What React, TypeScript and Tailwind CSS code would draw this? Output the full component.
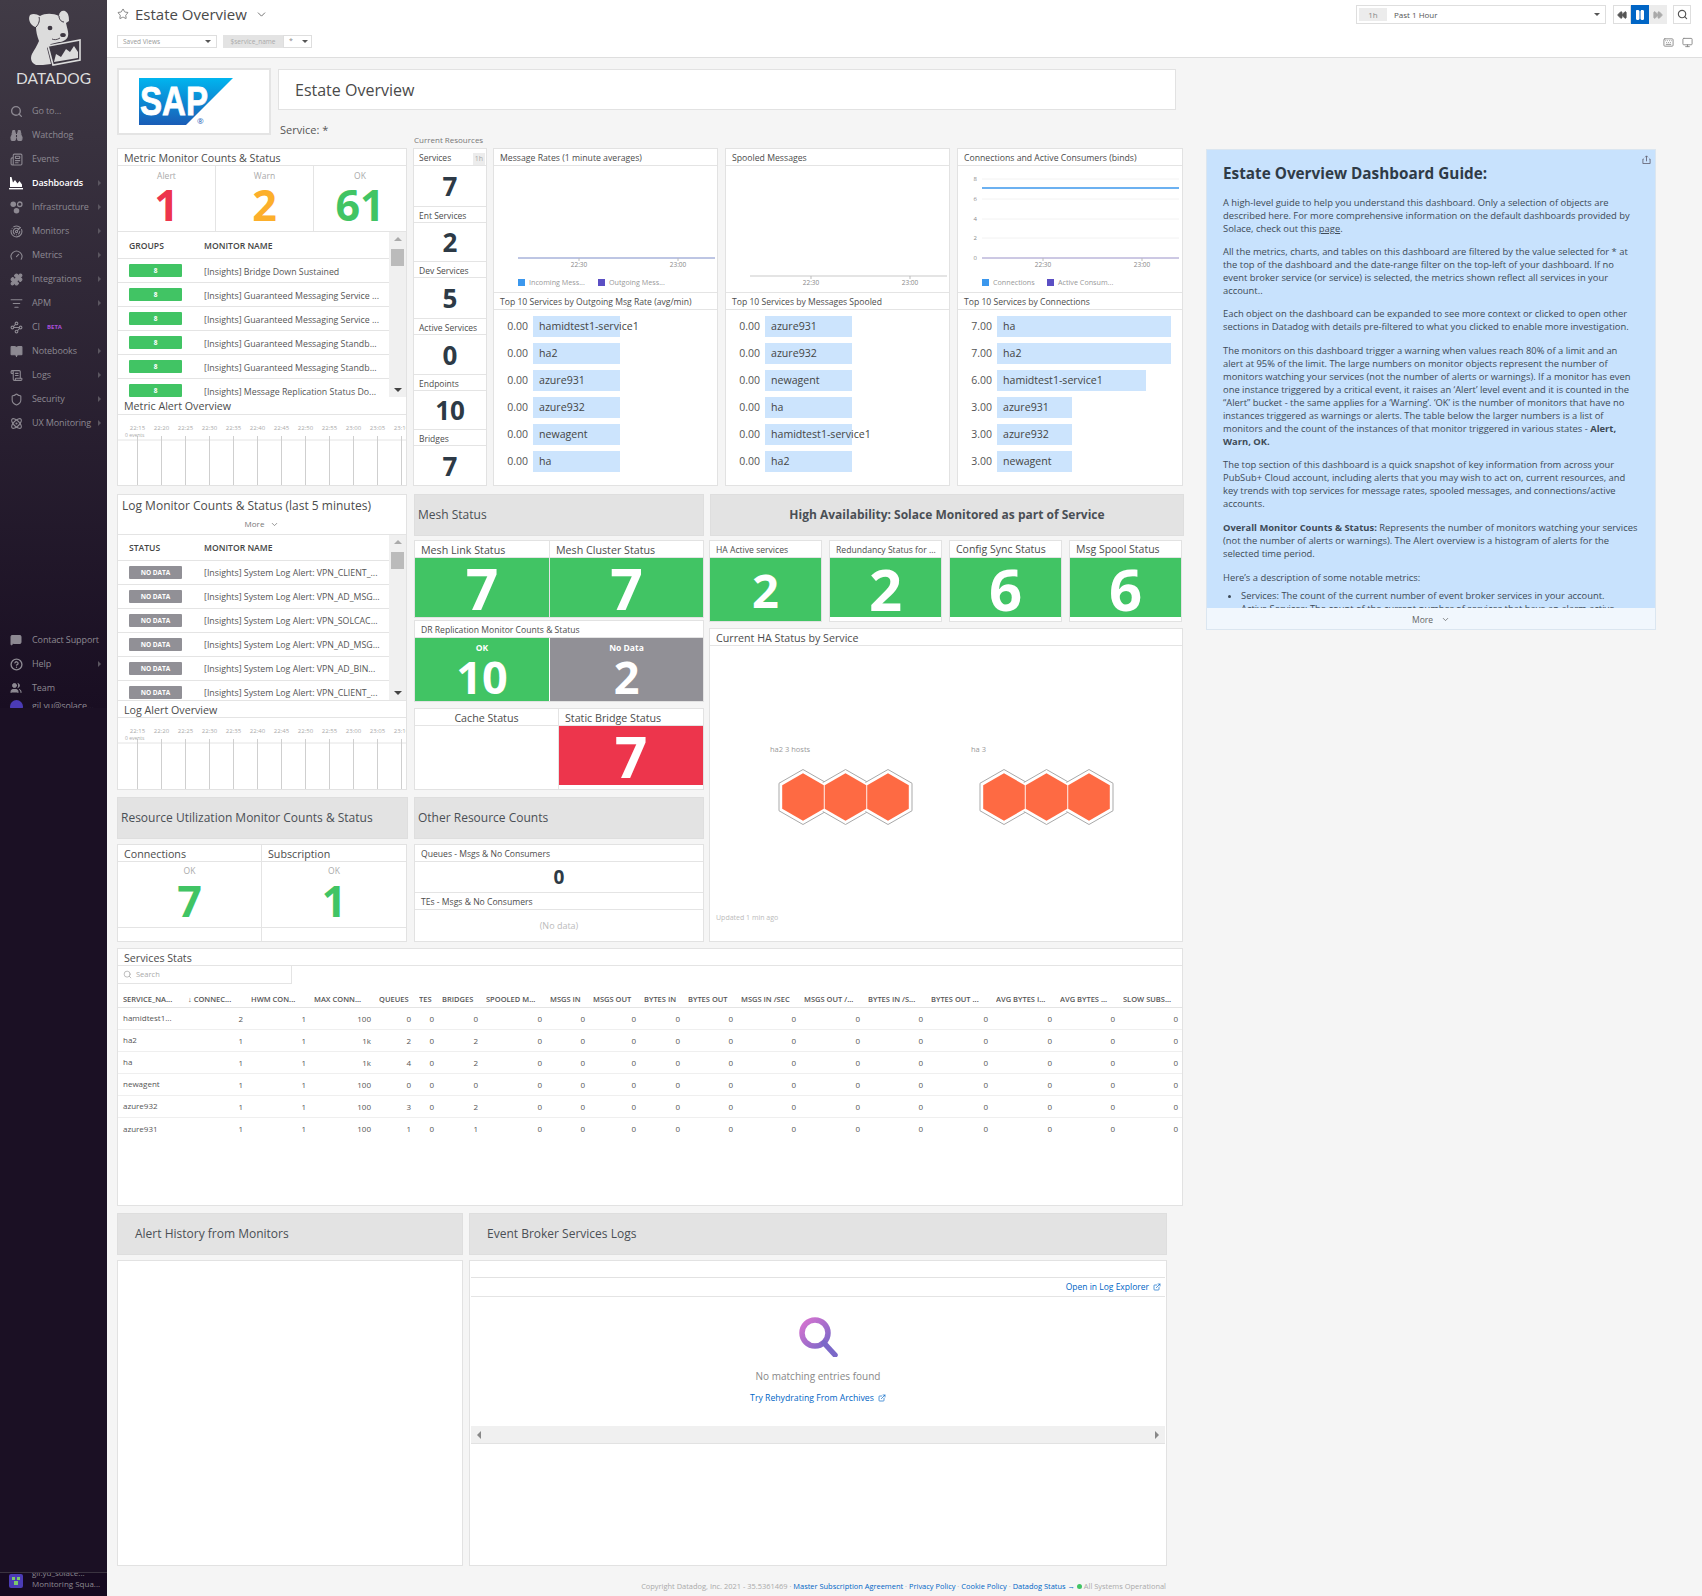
import {
  Atom,
  BookOpen,
  ChevronDown,
  CircleHelp,
  ExternalLink,
  Gauge,
  ListFilter,
  MessageSquare,
  Monitor,
  Newspaper,
  Pause,
  Puzzle,
  Radar,
  Rewind,
  FastForward,
  Search,
  Shield,
  Star,
  Users,
  Waypoints,
  Keyboard,
  ScrollText,
  Binoculars,
} from "lucide-react";
import type { ReactNode } from "react";

const INFRA = (
  <svg viewBox="0 0 14 14" className="w-[13px] h-[13px]" fill="currentColor">
    <circle cx="3.5" cy="3.5" r="3" />
    <circle cx="10.5" cy="3.5" r="2.4" fill="none" stroke="currentColor" strokeWidth="1.4" />
    <circle cx="7" cy="10.5" r="3" />
  </svg>
);

const DASH = (
  <svg viewBox="0 0 14 14" className="w-[14px] h-[14px]" fill="currentColor">
    <path d="M1 1v10h12V8.5L10.5 5 8.5 7.5 6 4 4 6.5 2.5 1z" />
    <rect x="0" y="12" width="14" height="1.4" />
  </svg>
);

const navItems: { label: string; icon: ReactNode; arrow?: boolean; active?: boolean; beta?: boolean }[] = [
  { label: "Go to...", icon: <Search size={13} strokeWidth={2.5} /> },
  { label: "Watchdog", icon: <Binoculars size={13} fill="currentColor" /> },
  { label: "Events", icon: <Newspaper size={13} /> },
  { label: "Dashboards", icon: DASH, arrow: true, active: true },
  { label: "Infrastructure", icon: INFRA, arrow: true },
  { label: "Monitors", icon: <Radar size={13} />, arrow: true },
  { label: "Metrics", icon: <Gauge size={13} />, arrow: true },
  { label: "Integrations", icon: <Puzzle size={13} fill="currentColor" />, arrow: true },
  { label: "APM", icon: <ListFilter size={13} />, arrow: true },
  { label: "CI", icon: <Waypoints size={13} />, beta: true },
  { label: "Notebooks", icon: <BookOpen size={13} fill="currentColor" />, arrow: true },
  { label: "Logs", icon: <ScrollText size={13} />, arrow: true },
  { label: "Security", icon: <Shield size={13} />, arrow: true },
  { label: "UX Monitoring", icon: <Atom size={13} />, arrow: true },
];

const footItems: { label: string; icon: ReactNode; arrow?: boolean }[] = [
  { label: "Contact Support", icon: <MessageSquare size={12} fill="currentColor" /> },
  { label: "Help", icon: <CircleHelp size={13} strokeWidth={2.5} />, arrow: true },
  { label: "Team", icon: <Users size={12} fill="currentColor" /> },
];

const NavRow = ({
  label,
  icon,
  arrow,
  active,
  beta,
  className = "",
}: {
  label: string;
  icon: ReactNode;
  arrow?: boolean;
  active?: boolean;
  beta?: boolean;
  className?: string;
}) => (
  <div className={`h-6 flex items-center pl-[9px] shrink-0 ${active ? "text-white" : "text-[#8d8992]"} ${className}`}>
    <span className="w-[14px] h-[14px] flex items-center justify-center">{icon}</span>
    <span className={`ml-[9px] text-[9px] tracking-[-0.1px] whitespace-nowrap ${active ? "font-semibold" : ""}`}>{label}</span>
    {beta && <span className="ml-[7px] text-[6px] font-bold text-[#a94fd8]">BETA</span>}
    {arrow && <span className="ml-auto mr-[6px] w-0 h-0 border-y-[3px] border-y-transparent border-l-[3px] border-l-[#5b5660]" />}
  </div>
);

const Sidebar = () => (
  <aside className="w-[107px] shrink-0 flex flex-col bg-[#160a20] relative z-10">
    <div className="h-[708px] overflow-hidden bg-gradient-to-b from-[#413b46] to-[#190e22]">
      <div className="h-[99px] flex flex-col items-center pt-[7px]">
        <svg viewBox="25 5 60 60" className="w-[60px] h-[60px]">
          <path
            fill="#dcdcdc"
            d="M31 13C34 11 38 12 41 14 46 11 54 11 60 14 60 10 63 8 66 9 70 11 70 16 70 19L67 21C68 26 70 31 69 34 68 38 63 40 60 40L52 42 48 46 52 62 44 63 37 63C32 61 31 56 33 52 35 48 38 44 40 39 38 34 37 29 37 25 33 25 28 18 31 13Z"
          />
          <path d="M40 15C41 18 40 22 37 25M60 14C60 17 62 20 65 20" fill="none" stroke="#3d3742" strokeWidth="1" />
          <ellipse cx="51" cy="26" rx="2.4" ry="2.2" fill="#3d3742" />
          <ellipse cx="64" cy="33" rx="2.8" ry="2" fill="#3d3742" />
          <path d="M61 36C58 38 55 38 53 37" fill="none" stroke="#3d3742" strokeWidth="0.9" />
          <path d="M49 44L81 38 81 58 54 63Z" fill="#3d3742" stroke="#dcdcdc" strokeWidth="1.6" />
          <path d="M55 60L57 52 62 55 67 47 71 50 75 44 79 50 79 56Z" fill="#dcdcdc" />
        </svg>
        <div className="text-[15.5px] leading-[16px] mt-[3px] text-[#dcdcdc] font-['Lato',sans-serif]">DATADOG</div>
      </div>
      {navItems.map((it) => (
        <NavRow key={it.label} {...it} />
      ))}
      <div className="h-[193px]" />
      {footItems.map((it) => (
        <NavRow key={it.label} {...it} />
      ))}
      <NavRow label="gil.yu@solace..." icon={<span className="block w-[13px] h-[13px] rounded-full bg-[#4b3bb5]" />} className="-mt-[6px]" />
    </div>
    <div className="h-[865px] bg-[#1b1024] border-b border-[#3a3340]" />
    <div className="flex-1 flex items-end pl-[9px] pb-[7px] overflow-hidden">
      <svg viewBox="0 0 14 14" className="w-[14px] h-[14px] mb-[1px] shrink-0">
        <rect width="14" height="14" rx="2" fill="#4b3bb5" />
        <path d="M3 3h3v3H3zM8 3h3v3H8zM5 7h4v4H5z" fill="#7cc96b" />
      </svg>
      <span className="ml-[9px] text-[8px] leading-[11px] text-[#8d8992] whitespace-nowrap">
        gil.yu_solace...
        <br />
        Monitoring Squa...
      </span>
    </div>
  </aside>
);

const Caret = ({ className = "" }: { className?: string }) => (
  <span className={`w-0 h-0 border-x-[3px] border-x-transparent border-t-[3px] border-t-[#555] ${className}`} />
);

const TopBar = () => (
  <header className="h-[58px] shrink-0 bg-white border-b border-[#dedede] flex justify-between pl-[10px] pr-[11px]">
    <div>
      <div className="flex items-center h-[20px] mt-[4px] text-[#555]">
        <Star size={12} strokeWidth={1.4} />
        <span className="ml-[6px] text-[15px] leading-5 text-[#4a4a4a]">Estate Overview</span>
        <ChevronDown size={13} className="ml-[8px]" strokeWidth={1.5} />
      </div>
      <div className="flex items-center mt-[11px]">
        <div className="w-[100px] h-[13px] border border-[#dedede] flex items-center justify-between px-[5px] text-[6.5px] text-[#999]">
          Saved Views
          <Caret />
        </div>
        <div className="ml-[6px] w-[60px] h-[13px] bg-[#e3e3e3] flex items-center justify-center text-[6.5px] text-[#aaa]">$service_name</div>
        <div className="w-[29px] h-[13px] border border-[#dedede] flex items-center justify-between pl-[5px] pr-[3px] text-[7px] text-[#888]">
          *
          <Caret />
        </div>
      </div>
    </div>
    <div className="flex flex-col items-end">
      <div className="flex mt-[5px] items-center">
        <div className="w-[250px] h-[19px] border border-[#dedede] flex items-center pl-[2px] pr-[5px]">
          <span className="w-[28px] h-[13px] bg-[#ececec] text-[8px] text-[#888] flex items-center justify-center">1h</span>
          <span className="ml-[7px] text-[8px] text-[#555]">Past 1 Hour</span>
          <Caret className="ml-auto" />
        </div>
        <div className="ml-[7px] flex h-[19px]">
          <span className="w-[18px] border border-[#dedede] flex items-center justify-center text-[#555]">
            <Rewind size={10} fill="currentColor" />
          </span>
          <span className="w-[18px] bg-[#0065c5] flex items-center justify-center text-white">
            <Pause size={12} fill="currentColor" />
          </span>
          <span className="w-[18px] bg-[#ececec] flex items-center justify-center text-[#aaa]">
            <FastForward size={10} fill="currentColor" />
          </span>
        </div>
        <span className="ml-[6px] w-[18px] h-[19px] border border-[#dedede] flex items-center justify-center text-[#555]">
          <Search size={11} strokeWidth={2.5} />
        </span>
      </div>
      <div className="flex items-center gap-[8px] -mr-[2px] mt-[13px] text-[#888]">
        <Keyboard size={11} />
        <Monitor size={11} />
      </div>
    </div>
  </header>
);

const Title = ({ children, size = "text-[10.7px]", className = "" }: { children: ReactNode; size?: string; className?: string }) => (
  <div className={`h-[17px] ${size.includes("8.") ? "pt-[3px]" : "pt-[2px]"} shrink-0 border-b border-[#e4e4e4] bg-white flex items-center whitespace-nowrap overflow-hidden text-[#4c4c4c] ${size} ${className.includes("pl-") ? "" : "pl-[6px]"} ${className}`}>
    {children}
  </div>
);

const SectionHead = ({ children, width, bold }: { children: ReactNode; width: string; bold?: boolean }) => (
  <div className={`h-[42px] ${width} bg-[#e3e3e3] border border-[#dedede] flex items-center text-[12px] text-[#4a4f55] ${bold ? "justify-center font-bold" : "pl-[3px]"}`}>
    {children}
  </div>
);

const ScrollBar = () => (
  <div className="w-[17px] shrink-0 bg-[#f0f0f0] relative flex flex-col items-center justify-between py-[5px]">
    <span className="w-0 h-0 border-x-[4px] border-x-transparent border-b-[4px] border-b-[#aaa]" />
    <span className="absolute left-[2px] right-[2px] top-[17px] h-[17px] bg-[#bbb]" />
    <span className="w-0 h-0 border-x-[4px] border-x-transparent border-t-[4px] border-t-[#444]" />
  </div>
);

const metricNames = [
  "[Insights] Bridge Down Sustained",
  "[Insights] Guaranteed Messaging Service ...",
  "[Insights] Guaranteed Messaging Service ...",
  "[Insights] Guaranteed Messaging Standb...",
  "[Insights] Guaranteed Messaging Standb...",
  "[Insights] Message Replication Status Do...",
];

const logNames = [
  "[Insights] System Log Alert: VPN_CLIENT_...",
  "[Insights] System Log Alert: VPN_AD_MSG...",
  "[Insights] System Log Alert: VPN_SOLCAC...",
  "[Insights] System Log Alert: VPN_AD_MSG...",
  "[Insights] System Log Alert: VPN_AD_BIN...",
  "[Insights] System Log Alert: VPN_CLIENT_...",
];

const MonitorTable = ({ first, names, noData }: { first: string; names: string[]; noData?: boolean }) => (
  <div className="flex h-[165px] shrink-0 overflow-hidden">
    <div className="flex-1 min-w-0 overflow-hidden">
      <div className={`${noData ? "h-[26px] pt-[1px]" : "h-[27px] pt-[2px]"} border-b border-[#e4e4e4] flex items-center text-[8.6px] font-semibold text-[#444]`}>
        <span className="w-[86px] pl-[11px]">{first}</span>
        <span>MONITOR NAME</span>
      </div>
      {names.map((n, i) => (
        <div key={i} className="h-[24px] shrink-0 border-b border-[#e4e4e4] flex items-center">
          <span className="w-[86px] pl-[11px] shrink-0 mb-px">
            <span className={`block w-[53px] h-[13px] rounded-[1px] text-white text-center text-[6.5px] font-bold leading-[13px] ${noData ? "bg-[#919096]" : "bg-[#41c464]"}`}>
              {noData ? "NO DATA" : "8"}
            </span>
          </span>
          <span className={`text-[8.8px] ${noData ? "pt-[3px]" : "pt-[5px]"} text-[#555] whitespace-nowrap`}>{n}</span>
        </div>
      ))}
    </div>
    <ScrollBar />
  </div>
);

const hours = ["22:15", "22:20", "22:25", "22:30", "22:35", "22:40", "22:45", "22:50", "22:55", "23:00", "23:05", "23:10"];

const AlertChart = () => (
  <svg width="288" height="71" className="block">
    <line x1="0" x2="288" y1="25" y2="25" stroke="#e4e4e4" />
    {hours.map((h, i) => (
      <g key={h}>
        <line x1={19.5 + i * 24} x2={19.5 + i * 24} y1="21" y2="71" stroke="#cfcfcf" />
        <text x={19.5 + i * 24} y="15" textAnchor="middle" fontSize="6" fill="#aaa">
          {h}
        </text>
      </g>
    ))}
    <text x="7" y="22" fontSize="5" fill="#aaa">
      0 events
    </text>
  </svg>
);

const Stat = ({ label, value, color, w }: { label: string; value: string; color: string; w: string }) => (
  <div className={`${w} flex flex-col items-center`}>
    <div className="text-[8.5px] text-[#aaa] mt-[4px] leading-[12px]">{label}</div>
    <div className={`text-[43px] font-bold leading-[45px] ${color}`}>{value}</div>
  </div>
);

const MetricMonitor = () => (
  <div className="w-[290px] h-[338px] border border-[#e2e2e2] bg-white flex flex-col shrink-0 overflow-hidden">
    <Title>Metric Monitor Counts &amp; Status</Title>
    <div className="h-[66px] flex border-b border-[#e4e4e4] divide-x divide-[#e4e4e4] shrink-0">
      <Stat label="Alert" value="1" color="text-[#ed354c]" w="w-[98px]" />
      <Stat label="Warn" value="2" color="text-[#fcaf2b]" w="w-[98px]" />
      <Stat label="OK" value="61" color="text-[#41c464]" w="flex-1" />
    </div>
    <MonitorTable first="GROUPS" names={metricNames} />
    <Title className="h-[18px]">Metric Alert Overview</Title>
    <AlertChart />
  </div>
);

const resources = [
  { label: "Services", v: "7", h: "h-[57px]" },
  { label: "Ent Services", v: "2", h: "h-[55px]" },
  { label: "Dev Services", v: "5", h: "h-[57px]" },
  { label: "Active Services", v: "0", h: "h-[56px]" },
  { label: "Endpoints", v: "10", h: "h-[55px]" },
  { label: "Bridges", v: "7", h: "h-[56px]" },
];

const Resources = () => (
  <div className="w-[74px] h-[338px] border border-[#e2e2e2] bg-white flex flex-col shrink-0">
    {resources.map(({ label, v, h }, i) => (
      <div key={label} className={`${h} flex flex-col shrink-0`}>
        <Title size="text-[8.5px]" className={`pl-[5px] ${i > 0 ? "border-t" : ""}`}>
          {label}
          {i === 0 && <span className="ml-auto mr-px px-[2px] h-[12px] bg-[#ececec] text-[7px] text-[#aaa] leading-[12px]">1h</span>}
        </Title>
        <div className="flex-1 flex items-center justify-center text-[26px] leading-none font-bold text-[#2d3a46]">{v}</div>
      </div>
    ))}
  </div>
);

type Bar = { v: string; name: string; w: number };

const Toplist = ({ bars }: { bars: Bar[] }) => (
  <div className="flex-1 pt-[6px]">
    {bars.map((b, i) => (
      <div key={i} className="h-[21px] mb-[6px] flex items-center relative">
        <span className="w-[34px] shrink-0 text-right text-[10.5px] font-medium text-[#555]">{b.v}</span>
        <div className="relative ml-[5px] h-[21px] flex-1">
          <div className="h-full bg-[#cce4fd]" style={{ width: b.w }} />
          <span className="absolute left-[6px] top-0 leading-[21px] text-[10.6px] text-[#444] whitespace-nowrap">{b.name}</span>
        </div>
      </div>
    ))}
  </div>
);

const Legend = ({ a, b, bx, y }: { a: string; b: string; bx: number; y: number }) => (
  <g fontSize="7.2" fill="#999">
    <rect x="24" y={y - 5} width="7" height="7" fill="#3b97ed" />
    <text x="35" y={y + 1}>
      {a}
    </text>
    <rect x={bx} y={y - 5} width="7" height="7" fill="#5b4fc4" />
    <text x={bx + 11} y={y + 1}>
      {b}
    </text>
  </g>
);

const Axis = ({ y, x1 = 24, x2 = 221, ticks = [85, 184], color = "#c9c9c9" }: { y: number; x1?: number; x2?: number; ticks?: number[]; color?: string }) => (
  <g>
    <line x1={x1} x2={x2} y1={y} y2={y} stroke={color} strokeWidth="1" />
    {ticks.map((t, i) => (
      <g key={t}>
        <line x1={t} x2={t} y1={y} y2={y + 3} stroke="#bbb" />
        <text x={t} y={y + 9} fontSize="6.5" fill="#888" textAnchor="middle">
          {i === 0 ? "22:30" : "23:00"}
        </text>
      </g>
    ))}
  </g>
);

const ChartCard = ({ title, bottom, chart, bars, w = "w-[225px]" }: { title: string; bottom: string; chart: ReactNode; bars: Bar[]; w?: string }) => (
  <div className={`${w} h-[338px] border border-[#e2e2e2] bg-white flex flex-col shrink-0`}>
    <Title size="text-[8.7px]">{title}</Title>
    <svg width="223" height="126" className="block shrink-0">
      {chart}
    </svg>
    <Title size="text-[8.6px]" className="border-t h-[18px]">
      {bottom}
    </Title>
    <Toplist bars={bars} />
  </div>
);

const msgBars: Bar[] = ["hamidtest1-service1", "ha2", "azure931", "azure932", "newagent", "ha"].map((name) => ({ v: "0.00", name, w: 87 }));
const spoolBars: Bar[] = ["azure931", "azure932", "newagent", "ha", "hamidtest1-service1", "ha2"].map((name) => ({ v: "0.00", name, w: 87 }));
const connBars: Bar[] = [
  { v: "7.00", name: "ha", w: 174 },
  { v: "7.00", name: "ha2", w: 174 },
  { v: "6.00", name: "hamidtest1-service1", w: 149 },
  { v: "3.00", name: "azure931", w: 75 },
  { v: "3.00", name: "azure932", w: 75 },
  { v: "3.00", name: "newagent", w: 75 },
];

const ConnChart = () => (
  <g>
    {[
      ["8", 13],
      ["6", 33],
      ["4", 53],
      ["2", 72],
    ].map(([l, y]) => (
      <g key={l}>
        <line x1="24" x2="221" y1={y} y2={y} stroke="#f2f2f2" />
        <text x="19" y={Number(y) + 2} fontSize="6" fill="#888" textAnchor="end">
          {l}
        </text>
      </g>
    ))}
    <text x="19" y="94" fontSize="6" fill="#888" textAnchor="end">
      0
    </text>
    <line x1="24" x2="221" y1="22" y2="22" stroke="#3b97ed" strokeWidth="1.5" />
    <Axis y={92} ticks={[85, 184]} color="#9a92c8" />
    <Legend a="Connections" b="Active Consum..." bx={89} y={118} />
  </g>
);

const Top = () => (
  <div className="flex gap-[6px]">
    <MetricMonitor />
    <Resources />
    <div className="flex gap-[7px]">
      <ChartCard
        title="Message Rates (1 minute averages)"
        bottom="Top 10 Services by Outgoing Msg Rate (avg/min)"
        bars={msgBars}
        chart={
          <g>
            <Axis y={92} color="#7d8cc8" />
            <Legend a="Incoming Mess..." b="Outgoing Mess..." bx={104} y={118} />
          </g>
        }
      />
      <ChartCard title="Spooled Messages" bottom="Top 10 Services by Messages Spooled" bars={spoolBars} chart={<Axis y={110} />} />
      <ChartCard title="Connections and Active Consumers (binds)" bottom="Top 10 Services by Connections" bars={connBars} chart={<ConnChart />} w="w-[226px]" />
    </div>
  </div>
);

const Tile = ({ value, w, bg, size, h = "h-[59px]", label }: { value: string; w: string; bg: string; size: string; h?: string; label?: string }) => (
  <div className={`${w} ${h} ${bg} flex flex-col items-center justify-center text-white font-bold pt-[2px]`}>
    {label && <div className="text-[8.5px] leading-[12px]">{label}</div>}
    <div className={`${size} leading-[1]`}>{value}</div>
  </div>
);

const StatusCard = ({ title, value, tall, titleSize = "text-[10.5px]" }: { title: string; value: string; tall?: boolean; titleSize?: string }) => (
  <div className="w-[113px] h-[82px] border border-[#e2e2e2] bg-white">
    <Title size={titleSize}>{title}</Title>
    <div className={`${tall ? "h-[63px]" : "h-[59px]"} bg-[#41c464] text-white font-bold flex items-center justify-center pt-[2px] ${tall ? "text-[47px]" : "text-[58px]"} leading-none`}>{value}</div>
  </div>
);

const Hexes = ({ x, label }: { x: number; label: string }) => {
  const hex = (cx: number, hw: number, hh: number) => {
    const cy = 151;
    const q = hh / 2;
    return `${cx},${cy - hh} ${cx + hw},${cy - q} ${cx + hw},${cy + q} ${cx},${cy + hh} ${cx - hw},${cy + q} ${cx - hw},${cy - q}`;
  };
  const cs = [x + 24, x + 66.5, x + 109];
  return (
    <g>
      <text x={x - 9} y="106" fontSize="7.5" fill="#999">
        {label}
      </text>
      {cs.map((c) => (
        <polygon key={c} points={hex(c, 24, 27.5)} fill="#fff" stroke="#a9a9a9" />
      ))}
      {cs.map((c) => (
        <polygon key={c} points={hex(c, 22.4, 26)} fill="#fff" />
      ))}
      {cs.map((c) => (
        <polygon key={c} points={hex(c, 20.8, 23.7)} fill="#fe6a43" />
      ))}
    </g>
  );
};

const MiddleLeft = () => (
  <div className="w-[297px] shrink-0">
    <div className="w-[290px] h-[296px] border border-[#e2e2e2] bg-white flex flex-col">
      <Title size="text-[12px]" className="border-none h-[19px] pl-[4px]">
        Log Monitor Counts &amp; Status (last 5 minutes)
      </Title>
      <div className="h-[21px] shrink-0 border-b border-[#e4e4e4] flex items-center justify-center text-[8px] text-[#777] gap-[6px]">
        More <ChevronDown size={9} />
      </div>
      <MonitorTable first="STATUS" names={logNames} noData />
      <Title className="border-t h-[18px]">Log Alert Overview</Title>
      <AlertChart />
    </div>
    <div className="mt-[7px]">
      <SectionHead width="w-[291px]">Resource Utilization Monitor Counts &amp; Status</SectionHead>
    </div>
    <div className="mt-[5px] w-[290px] h-[98px] border border-[#e2e2e2] bg-white flex divide-x divide-[#e4e4e4]">
      {[
        ["Connections", "7"],
        ["Subscription", "1"],
      ].map(([t, v]) => (
        <div key={t} className="w-1/2 flex flex-col">
          <Title>{t}</Title>
          <div className="h-[66px] shrink-0 border-b border-[#e4e4e4] flex flex-col items-center">
            <span className="text-[8.5px] text-[#aaa] mt-[3px] leading-[12px]">OK</span>
            <span className="text-[43px] leading-[47px] font-bold text-[#41c464]">{v}</span>
          </div>
        </div>
      ))}
    </div>
  </div>
);

const MiddleCenter = () => (
  <div className="w-[296px] shrink-0">
    <SectionHead width="w-[290px]">Mesh Status</SectionHead>
    <div className="mt-[4px] w-[290px] h-[78px] border border-[#e2e2e2] bg-white flex">
      <div className="w-[135px] border-r border-[#e4e4e4]">
        <Title>Mesh Link Status</Title>
        <Tile value="7" w="w-full" bg="bg-[#41c464]" size="text-[57px]" />
      </div>
      <div className="flex-1">
        <Title>Mesh Cluster Status</Title>
        <Tile value="7" w="w-full" bg="bg-[#41c464]" size="text-[57px]" />
      </div>
    </div>
    <div className="mt-[2px] w-[290px] h-[82px] border border-[#e2e2e2] bg-white">
      <Title size="text-[8.6px]">DR Replication Monitor Counts &amp; Status</Title>
      <div className="flex">
        <Tile value="10" w="w-[135px] border-r border-white" bg="bg-[#41c464]" size="text-[45px]" h="h-[63px]" label="OK" />
        <Tile value="2" w="flex-1" bg="bg-[#919096]" size="text-[45px]" h="h-[63px]" label="No Data" />
      </div>
    </div>
    <div className="mt-[6px] w-[290px] h-[82px] border border-[#e2e2e2] bg-white flex">
      <div className="w-[144px] border-r border-[#e4e4e4]">
        <Title className="justify-center pl-0">Cache Status</Title>
      </div>
      <div className="flex-1">
        <Title>Static Bridge Status</Title>
        <Tile value="7" w="w-full" bg="bg-[#ed354c]" size="text-[57px]" />
      </div>
    </div>
    <div className="mt-[7px]">
      <SectionHead width="w-[290px]">Other Resource Counts</SectionHead>
    </div>
    <div className="mt-[5px] w-[290px] h-[98px] border border-[#e2e2e2] bg-white flex flex-col">
      <Title size="text-[8.6px]">Queues - Msgs &amp; No Consumers</Title>
      <div className="h-[30px] flex items-center justify-center text-[19px] font-bold text-[#2d3a46] shrink-0">0</div>
      <Title size="text-[8.6px]" className="border-t h-[18px]">
        TEs - Msgs &amp; No Consumers
      </Title>
      <div className="flex-1 flex items-center justify-center text-[9px] text-[#bbb]">(No data)</div>
    </div>
  </div>
);

const MiddleRight = () => (
  <div className="w-[474px] shrink-0">
    <SectionHead width="w-full" bold>
      High Availability: Solace Monitored as part of Service
    </SectionHead>
    <div className="mt-[4px] -ml-px flex gap-[7px]">
      <StatusCard title="HA Active services" value="2" tall titleSize="text-[8.6px]" />
      <StatusCard title="Redundancy Status for ..." value="2" titleSize="text-[8.6px]" />
      <StatusCard title="Config Sync Status" value="6" />
      <StatusCard title="Msg Spool Status" value="6" />
    </div>
    <div className="mt-[6px] -ml-px w-[474px] h-[314px] border border-[#e2e2e2] bg-white flex flex-col">
      <Title>Current HA Status by Service</Title>
      <div className="relative flex-1">
        <svg width="471" height="295" className="block">
          <Hexes x={69} label="ha2 3 hosts" />
          <Hexes x={270} label="ha 3" />
          <text x="6" y="274" fontSize="7" fill="#bbb">
            Updated 1 min ago
          </text>
        </svg>
      </div>
    </div>
  </div>
);

const cols = [
  ["SERVICE_NA...", 66],
  ["CONNEC...", 63],
  ["HWM CON...", 63],
  ["MAX CONN...", 65],
  ["QUEUES", 40],
  ["TES", 23],
  ["BRIDGES", 44],
  ["SPOOLED M...", 64],
  ["MSGS IN", 43],
  ["MSGS OUT", 51],
  ["BYTES IN", 44],
  ["BYTES OUT", 53],
  ["MSGS IN /SEC", 63],
  ["MSGS OUT /...", 64],
  ["BYTES IN /S...", 63],
  ["BYTES OUT ...", 65],
  ["AVG BYTES I...", 64],
  ["AVG BYTES ...", 63],
  ["SLOW SUBS...", 59],
] as const;

const rows: string[][] = [
  ["hamidtest1...", "2", "1", "100", "0", "0", "0"],
  ["ha2", "1", "1", "1k", "2", "0", "2"],
  ["ha", "1", "1", "1k", "4", "0", "2"],
  ["newagent", "1", "1", "100", "0", "0", "0"],
  ["azure932", "1", "1", "100", "3", "0", "2"],
  ["azure931", "1", "1", "100", "1", "0", "1"],
];

const gridCols = "grid grid-cols-[65px_63px_63px_65px_40px_23px_44px_64px_43px_51px_44px_53px_63px_64px_63px_65px_64px_63px_59px]";

const ServicesStats = () => (
  <div className="mt-[6px] w-[1066px] h-[258px] border border-[#e2e2e2] bg-white">
    <Title>Services Stats</Title>
    <div className="w-[174px] h-[18px] border-r border-b border-[#e4e4e4] flex items-center pl-[5px] text-[#aaa] text-[7.5px] gap-[4px]">
      <Search size={9} /> Search
    </div>
    <div className={`${gridCols} pl-[5px] pt-[2px] mt-[6px] h-[18px] border-b border-[#e4e4e4] items-center text-[7.5px] font-semibold text-[#555]`}>
      {cols.map(([c], i) => (
        <span key={c} className="whitespace-nowrap overflow-hidden">
          {i === 1 && "↓ "}
          {c}
        </span>
      ))}
    </div>
    {rows.map((r) => (
      <div key={r[0]} className={`${gridCols} pl-[5px] h-[22px] border-b border-[#efefef] last:border-0 items-center text-[8px] text-[#555]`}>
        {cols.map(([c], i) =>
          i === 0 ? (
            <span key={c} className="mb-[1px]">
              {r[0]}
            </span>
          ) : (
            <span key={c} className={`text-right ${i === 18 ? "pr-[4px]" : "pr-[8px]"}`}>
              {r[i] ?? "0"}
            </span>
          )
        )}
      </div>
    ))}
  </div>
);

const LogsPanel = () => (
  <div className="w-[698px] h-[306px] border border-[#e2e2e2] bg-white pt-[16px]">
    <div className="border-y border-[#e2e2e2] mx-px">
      <div className="h-[19px] border-b border-[#e4e4e4] flex items-center justify-end pr-[4px] text-[8.5px] text-[#0065c5] gap-[4px]">
        Open in Log Explorer <ExternalLink size={8} />
      </div>
      <div className="h-[129px] flex flex-col items-center pt-[20px]">
        <svg viewBox="0 0 40 40" className="w-[40px] h-[40px] shrink-0">
          <defs>
            <linearGradient id="lens" x1="0" y1="0" x2="1" y2="1">
              <stop offset="0" stopColor="#d873d0" />
              <stop offset="1" stopColor="#7b68c8" />
            </linearGradient>
          </defs>
          <circle cx="17" cy="16" r="13" fill="none" stroke="url(#lens)" strokeWidth="5.5" />
          <line x1="26" y1="26" x2="37" y2="38" stroke="#7b68c8" strokeWidth="5.5" strokeLinecap="round" />
        </svg>
        <div className="mt-[13px] text-[10px] leading-[13px] text-[#888]">No matching entries found</div>
        <div className="mt-[9px] text-[8.7px] leading-[12px] text-[#0065c5] flex items-center gap-[4px]">
          Try Rehydrating From Archives <ExternalLink size={8} />
        </div>
      </div>
      <div className="h-[17px] bg-[#f0f0f0] flex items-center justify-between px-[6px]">
        <span className="w-0 h-0 border-y-[4px] border-y-transparent border-r-[4px] border-r-[#888]" />
        <span className="w-0 h-0 border-y-[4px] border-y-transparent border-l-[4px] border-l-[#888]" />
      </div>
    </div>
  </div>
);

const Guide = () => (
  <div className="relative w-[450px] h-[481px] mt-[91px] border border-[#dbe6f0] bg-[#c8e2fd] overflow-hidden text-[#3d4a57] text-[9.4px] leading-[13px]">
    <div className="absolute right-[4px] top-[5px] text-[#667]">
      <svg viewBox="0 0 10 10" className="w-[9px] h-[9px]" fill="none" stroke="currentColor">
        <path d="M2 4.5H1v5h8v-5H8M5 7V1M3.5 2.5L5 1l1.5 1.5" />
      </svg>
    </div>
    <div className="pl-[16px] pr-[15px]">
      <h1 className="text-[15.3px] leading-[20px] font-bold mt-[13px] mb-[13px] text-[#2f3b47]">Estate Overview Dashboard Guide:</h1>
      <p>
        A high-level guide to help you understand this dashboard. Only a selection of objects are<br />
        described here. For more comprehensive information on the default dashboards provided by<br />
        Solace, check out this <span className="underline">page</span>.
      </p>
      <p className="mt-[10px]">
        All the metrics, charts, and tables on this dashboard are filtered by the value selected for * at<br />
        the top of the dashboard and the date-range filter on the top-left of your dashboard. If no<br />
        event broker service (or service) is selected, the metrics shown reflect all services in your<br />
        account..
      </p>
      <p className="mt-[10px]">
        Each object on the dashboard can be expanded to see more context or clicked to open other<br />
        sections in Datadog with details pre-filtered to what you clicked to enable more investigation.
      </p>
      <p className="mt-[11px]">
        The monitors on this dashboard trigger a warning when values reach 80% of a limit and an<br />
        alert at 95% of the limit. The large numbers on monitor objects represent the number of<br />
        monitors watching your services (not the number of alerts or warnings). If a monitor has even<br />
        one instance triggered by a critical event, it raises an ‘Alert’ level event and it is counted in the<br />
        “Alert” bucket - the same applies for a ‘Warning’. ‘OK’ is the number of monitors that have no<br />
        instances triggered as warnings or alerts. The table below the larger numbers is a list of<br />
        monitors and the count of the instances of that monitor triggered in various states - <b>Alert,</b><br />
        <b>Warn, OK.</b>
      </p>
      <p className="mt-[10px]">
        The top section of this dashboard is a quick snapshot of key information from across your<br />
        PubSub+ Cloud account, including alerts that you may wish to act on, current resources, and<br />
        key trends with top services for message rates, spooled messages, and connections/active<br />
        accounts.
      </p>
      <p className="mt-[11px]">
        <b>Overall Monitor Counts &amp; Status:</b> Represents the number of monitors watching your services<br />
        (not the number of alerts or warnings). The Alert overview is a histogram of alerts for the<br />
        selected time period.
      </p>
      <p className="mt-[11px]">Here’s a description of some notable metrics:</p>
      <ul className="list-disc pl-[18px] mt-[5px]">
        <li>Services: The count of the current number of event broker services in your account.</li>
        <li>Active Services: The count of the current number of services that have an alarm active.</li>
      </ul>
    </div>
    <div className="absolute left-0 right-0 bottom-0 h-[21px] pt-[2px] bg-[#f1f7fd] flex items-center justify-center gap-[8px] text-[8.5px] text-[#666]">
      More <ChevronDown size={9} />
    </div>
  </div>
);

const Dashboard = () => (
  <div className="flex pl-[10px]">
    <div className="w-[1067px] shrink-0">
      <div className="h-[90px] flex pt-[10px]">
        <div className="w-[154px] h-[67px] border-2 border-[#e4e4e4] bg-white shrink-0 flex items-center justify-center pr-[15px]">
          <svg width="95" height="48" className="block">
            <defs>
              <linearGradient id="sap" x1="0" y1="0" x2="0" y2="1">
                <stop offset="0" stopColor="#00b5ef" />
                <stop offset="1" stopColor="#1a5cb6" />
              </linearGradient>
            </defs>
            <polygon points="0,0 94,0 47,47 0,47" fill="url(#sap)" />
            <text x="1" y="37" fontFamily="Liberation Sans, sans-serif" fontWeight="700" fontSize="40" fill="#fff" stroke="#fff" strokeWidth="0.8" textLength="68" lengthAdjust="spacingAndGlyphs">
              SAP
            </text>
            <text x="58" y="46" fontSize="8" fill="#1a5cb6">
              ®
            </text>
          </svg>
        </div>
        <div className="ml-[7px] flex-1 pr-[7px]">
          <div className="mt-px h-[41px] w-[898px] border border-[#e2e2e2] bg-white flex items-center pl-[16px] text-[16px] text-[#4a4a4a]">Estate Overview</div>
          <div className="mt-[14px] ml-[2px] text-[11px] leading-[11px] text-[#555]">Service: *</div>
          <div className="-mt-[1px] ml-[136px] text-[8px] leading-[11px] text-[#777]">Current Resources</div>
        </div>
      </div>
      <Top />
      <div className="flex mt-[8px]">
        <MiddleLeft />
        <MiddleCenter />
        <MiddleRight />
      </div>
      <ServicesStats />
      <div className="flex gap-[6px] mt-[7px]">
        <div className="w-[346px] h-[42px] bg-[#e3e3e3] border border-[#dedede] flex items-center pl-[17px] text-[12px] text-[#4a4f55]">Alert History from Monitors</div>
        <div className="w-[698px] h-[42px] bg-[#e3e3e3] border border-[#dedede] flex items-center pl-[17px] text-[12px] text-[#4a4f55]">Event Broker Services Logs</div>
      </div>
      <div className="flex gap-[6px] mt-[5px]">
        <div className="w-[346px] h-[306px] border border-[#e2e2e2] bg-white" />
        <LogsPanel />
      </div>
      <div className="w-[1049px] text-right mt-[15px] text-[7.45px] text-[#aaa] whitespace-nowrap">
        Copyright Datadog, Inc. 2021 - 35.5361469 · <span className="text-[#0065c5]">Master Subscription Agreement</span> · <span className="text-[#0065c5]">Privacy Policy</span> ·{" "}
        <span className="text-[#0065c5]">Cookie Policy</span> · <span className="text-[#0065c5]">Datadog Status</span> <span className="text-[#0065c5]">→</span>{" "}
        <span className="inline-block w-[5px] h-[5px] rounded-full bg-[#41c464]" /> All Systems Operational
      </div>
    </div>
    <div className="ml-[22px]">
      <Guide />
    </div>
  </div>
);

export default function App() {
  return (
    <div className="w-[1702px] h-[1596px] flex overflow-hidden bg-[#f5f5f5] font-['Open_Sans',sans-serif]">
      <Sidebar />
      <main className="flex-1 flex flex-col min-w-0">
        <TopBar />
        <Dashboard />
      </main>
    </div>
  );
}
